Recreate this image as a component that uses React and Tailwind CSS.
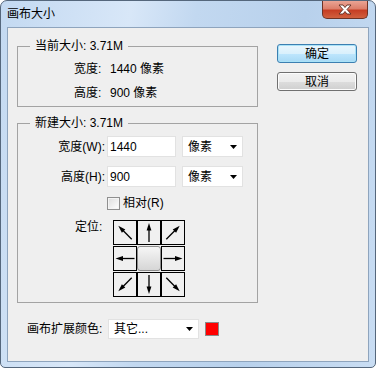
import React from "react";

const FONT = { fontFamily: '"Liberation Sans", "Noto Sans CJK SC", sans-serif' };

function Caret() {
  return (
    <svg width="7" height="4" viewBox="0 0 7 4" className="shrink-0">
      <polygon points="0,0 7,0 3.5,4" fill="#000" />
    </svg>
  );
}

function Select({ value, className = "" }) {
  return (
    <div className={`flex items-center justify-between bg-white border border-[#e2e2e2] pl-[5px] pr-[5px] ${className}`}>
      <span className="text-[12px] leading-none">{value}</span>
      <Caret />
    </div>
  );
}

function Arrow({ angle }) {
  return (
    <svg width="22" height="23" viewBox="0 0 22 23">
      <g transform={`rotate(${angle} 11 11.5)`}>
        <line x1="11" y1="21" x2="11" y2="7" stroke="#000" strokeWidth="1.3" />
        <polygon points="11,2 8.6,9.5 13.4,9.5" fill="#000" />
      </g>
    </svg>
  );
}

function Cell({ angle }) {
  return (
    <div className="w-[24px] h-[25px] border border-black bg-[#f0f0f0] flex items-center justify-center">
      <Arrow angle={angle} />
    </div>
  );
}

function AnchorGrid() {
  return (
    <div className="grid grid-cols-[24px_24px_24px] gap-y-[1px]">
      <Cell angle={-45} />
      <Cell angle={0} />
      <Cell angle={45} />
      <Cell angle={-90} />
      <div className="w-[24px] h-[25px] rounded-[3px] border border-[#8c8c8c] bg-[linear-gradient(#f6f6f6,#d6d6d6)]" />
      <Cell angle={90} />
      <Cell angle={-135} />
      <Cell angle={180} />
      <Cell angle={135} />
    </div>
  );
}

function Button({ label, primary }) {
  return (
    <button
      className={`w-[80px] h-[19px] rounded-[3px] text-[12px] leading-none flex items-center justify-center border ${
        primary
          ? "border-[#3c7fb1] bg-[linear-gradient(#eaf6fd_0%,#d9f0fc_50%,#bee6fd_51%,#a7d9f5_100%)] shadow-[inset_0_0_0_1px_#a9e2f7]"
          : "border-[#707070] bg-[linear-gradient(#f2f2f2_0%,#ebebeb_50%,#dddddd_51%,#cfcfcf_100%)] shadow-[inset_0_0_0_1px_#fcfcfc]"
      }`}
    >
      {label}
    </button>
  );
}

function CloseButton() {
  return (
    <div className="w-[46px] h-[18px] rounded-b-[5px] border border-t-0 border-[#6d3326] bg-[linear-gradient(#eaa494_0%,#dc7f6b_45%,#c63e24_55%,#d0603f_100%)] flex items-center justify-center">
      <svg width="14" height="11" viewBox="0 0 14 11">
        <path d="M1 1 L5 1 L7 3.5 L9 1 L13 1 L9 5.5 L13 10 L9 10 L7 7.5 L5 10 L1 10 L5 5.5 Z" fill="#fff" stroke="#5b2a20" strokeWidth="0.9" strokeLinejoin="round" />
      </svg>
    </div>
  );
}

export default function App() {
  return (
    <div className="w-[376px] h-[368px] text-black text-[12px]" style={FONT}>
      <div className="w-full h-full flex flex-col rounded-t-[7px] rounded-b-[5px] border border-[#55677c] bg-[linear-gradient(100deg,#c3d9f1_0%,#d8e7f8_30%,#c2d8f0_45%,#b8d1ec_70%,#c9ddf3_100%)]">
        {/* title bar */}
        <div className="h-[26px] flex items-start shrink-0">
          <span className="pl-[6px] pt-[5px] leading-[16px] text-[12px]">画布大小</span>
          <div className="ml-auto mr-[7px]">
            <CloseButton />
          </div>
        </div>

        {/* client area */}
        <div className="flex-1 mx-[6px] mb-[5px] border border-[#8ea4bd] bg-[#efefef] flex flex-col">
          <div className="flex">
            <div className="ml-[9px] w-[241px]">
              <fieldset className="mt-[10px] border border-[#a3a3a3] p-0 m-0">
                <legend className="ml-[12px] px-[5px] leading-[16px]">当前大小: 3.71M</legend>
                <div className="pt-[3px] pl-[56px] pb-[1px]">
                  <div className="flex leading-[24px]">
                    <span className="w-[36px]">宽度:</span>
                    <span>1440 像素</span>
                  </div>
                  <div className="flex leading-[24px]">
                    <span className="w-[36px]">高度:</span>
                    <span>900 像素</span>
                  </div>
                </div>
              </fieldset>

              <fieldset className="mt-[8px] border border-[#a3a3a3] p-0 m-0 h-[188px]">
                <legend className="ml-[12px] px-[5px] leading-[16px]">新建大小: 3.71M</legend>
                <div className="flex items-center mt-[5px]">
                  <span className="w-[87px] text-right">宽度(W):</span>
                  <div className="ml-[2px] w-[69px] h-[21px] bg-white border border-[#e2e2e2] pl-[2px] flex items-center">1440</div>
                  <Select value="像素" className="ml-[6px] w-[61px] h-[21px]" />
                </div>
                <div className="flex items-center mt-[9px]">
                  <span className="w-[87px] text-right">高度(H):</span>
                  <div className="ml-[2px] w-[69px] h-[21px] bg-white border border-[#e2e2e2] pl-[2px] flex items-center">900</div>
                  <Select value="像素" className="ml-[6px] w-[61px] h-[21px]" />
                </div>
                <div className="flex items-center mt-[8px] ml-[89px]">
                  <div className="w-[13px] h-[13px] border border-[#8f8f8f] bg-[linear-gradient(135deg,#dcdcdc,#ffffff)] shadow-[inset_0_0_0_1px_#f4f4f4]" />
                  <span className="ml-[3px] leading-[16px]">相对(R)</span>
                </div>
                <div className="flex items-start mt-[9px]">
                  <span className="ml-[57px] w-[38px] leading-[16px] mt-[-1px]">定位:</span>
                  <AnchorGrid />
                </div>
              </fieldset>
            </div>

            <div className="ml-[19px] mt-[16px] flex flex-col gap-[9px]">
              <Button label="确定" primary />
              <Button label="取消" />
            </div>
          </div>

          <div className="flex items-center mt-[16px] ml-[19px]">
            <span className="w-[81px]">画布扩展颜色:</span>
            <Select value="其它..." className="w-[91px] h-[20px]" />
            <div className="ml-[6px] w-[14px] h-[14px] bg-[#ff0000] border border-[#8a8a8a]" />
          </div>
        </div>
      </div>
    </div>
  );
}
